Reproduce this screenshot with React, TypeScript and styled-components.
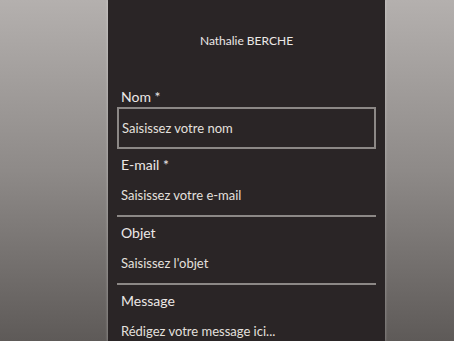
import React from "react";
import styled, { createGlobalStyle } from "styled-components";

const Global = createGlobalStyle`
  html, body { margin: 0; padding: 0; }
  body {
    height: 341px;
    overflow: hidden;
    background: linear-gradient(180deg, #b4b0ae 0%, #8e8a88 50%, #5e5a58 100%);
    font-family: Lato, "Noto Sans", sans-serif;
  }
`;

const Page = styled.div`
  height: 341px;
  display: flex;
`;

const Panel = styled.div`
  margin-left: 108px;
  width: 277px;
  height: 341px;
  background: #2a2526;
  overflow: hidden;
  display: flex;
  flex-direction: column;
  box-shadow: -1px 0 2px rgba(255, 255, 255, 0.25), 1px 0 2px rgba(255, 255, 255, 0.2);
`;

const Header = styled.div`
  flex-shrink: 0;
  height: 88px;
  display: flex;
  justify-content: center;
  padding-top: 33px;
  box-sizing: border-box;
  color: #ece8e6;
  font-size: 12px;
  line-height: 16px;
`;

const Form = styled.form`
  flex-shrink: 0;
  display: flex;
  flex-direction: column;
  gap: 7px;
  padding: 0 9px;
`;

const Field = styled.div`
  flex-shrink: 0;
  display: flex;
  flex-direction: column;
  gap: 1px;
`;

const Label = styled.label`
  color: #ece8e6;
  font-size: 14px;
  line-height: 18px;
  padding-left: 4px;
`;

const Input = styled.input<{ $boxed?: boolean }>`
  flex-shrink: 0;
  box-sizing: border-box;
  height: 42px;
  width: 100%;
  margin: 0;
  background: transparent;
  border: 0;
  border-bottom: 2px solid #8c8886;
  ${(p) => (p.$boxed ? "border: 2px solid #8c8886;" : "")}
  padding: 0 0 0 ${(p) => (p.$boxed ? "3px" : "4px")};
  color: #ece8e6;
  font-family: inherit;
  font-size: 13px;
  outline: none;
  &::placeholder { color: #e4e0de; opacity: 1; }
`;

export default function App() {
  return (
    <>
      <Global />
      <Page>
        <Panel>
          <Header>Nathalie BERCHE</Header>
          <Form>
            <Field>
              <Label>Nom *</Label>
              <Input $boxed placeholder="Saisissez votre nom" />
            </Field>
            <Field>
              <Label>E-mail *</Label>
              <Input placeholder="Saisissez votre e-mail" />
            </Field>
            <Field>
              <Label>Objet</Label>
              <Input placeholder="Saisissez l'objet" />
            </Field>
            <Field>
              <Label>Message</Label>
              <Input placeholder="Rédigez votre message ici..." />
            </Field>
          </Form>
        </Panel>
      </Page>
    </>
  );
}
